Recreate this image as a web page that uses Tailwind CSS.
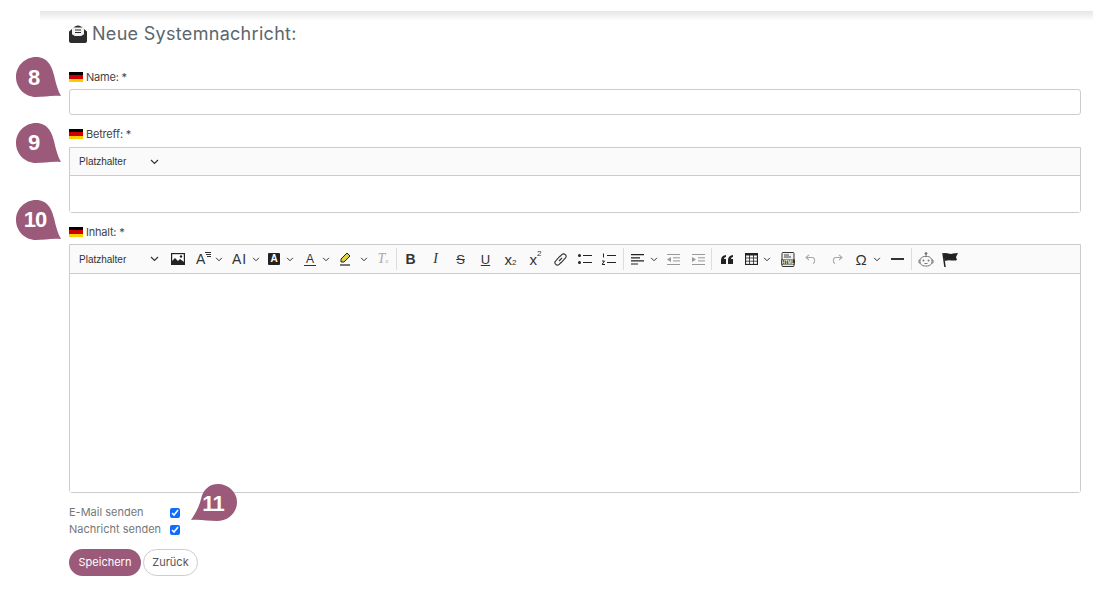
<!DOCTYPE html>
<html lang="de">
<head>
    <meta charset="UTF-8">
    <meta name="viewport" content="width=device-width, initial-scale=1.0">
    <title>Neue Systemnachricht</title>
    <script src="https://cdn.jsdelivr.net/npm/@tailwindcss/browser@4"></script>
</head>
<body class="bg-white overflow-hidden font-['Inter',sans-serif] text-[#555]">
<div class="relative h-[595px] w-[1093px] overflow-hidden">
    <!-- top shadow -->
    <div class="ml-[40px] h-[10px] mt-[11px] bg-gradient-to-b from-[#e6e6e6] to-white"></div>

    <!-- number bubbles -->
    <svg class="absolute left-[16px] top-[57px] w-[45px] h-[41px]" viewBox="0 0 45 41"><path d="M20 0C32 0 36 10 38 18C40 27 42 34 45 39C36 38 28 40 20 40C9 40 0 31 0 20C0 9 9 0 20 0Z" fill="#9b5a79"/></svg>
    <span class="absolute left-[14px] top-[57px] w-[40px] h-[40px] flex items-center justify-center text-white font-bold text-[22px] font-['Liberation_Sans',sans-serif]">8</span>
    <svg class="absolute left-[16px] top-[123px] w-[45px] h-[41px]" viewBox="0 0 45 41"><path d="M20 0C32 0 36 10 38 18C40 27 42 34 45 39C36 38 28 40 20 40C9 40 0 31 0 20C0 9 9 0 20 0Z" fill="#9b5a79"/></svg>
    <span class="absolute left-[14px] top-[122px] w-[40px] h-[40px] flex items-center justify-center text-white font-bold text-[22px] font-['Liberation_Sans',sans-serif]">9</span>
    <svg class="absolute left-[16px] top-[200px] w-[45px] h-[41px]" viewBox="0 0 45 41"><path d="M20 0C32 0 36 10 38 18C40 27 42 34 45 39C36 38 28 40 20 40C9 40 0 31 0 20C0 9 9 0 20 0Z" fill="#9b5a79"/></svg>
    <span class="absolute left-[15px] top-[199px] w-[40px] h-[40px] flex items-center justify-center text-white font-bold text-[22px] tracking-[-1px] font-['Liberation_Sans',sans-serif]">10</span>
    <svg class="absolute left-[191px] top-[484px] w-[46px] h-[38px]" viewBox="0 0 46 38"><path d="M27 0C37 0 46 8 46 18C46 29 37 37 26 37C17 37 9 35 0 36C4 30 8 23 10 15C12 6 18 0 27 0Z" fill="#9b5a79"/></svg>
    <span class="absolute left-[192px] top-[484px] w-[42px] h-[38px] flex items-center justify-center text-white font-bold text-[22px] tracking-[-1px] font-['Liberation_Sans',sans-serif]">11</span>

    <div class="pl-[69px] pr-[12px]">
        <!-- heading -->
        <div class="flex items-center gap-[5px] h-[26px] mt-0">
            <svg class="w-[18px] h-[18px] shrink-0" viewBox="0 0 18 18"><path d="M0 6.500L6 1.500Q9 -.5 12 1.500L18 6.500V16a2 2 0 0 1-2 2H2a2 2 0 0 1-2-2Z" fill="#2d2d2d"/><rect x="3" y="2.500" width="12" height="8.500" rx="1" fill="#f3f3f3"/><path d="M6 5h6M6 7.500h6" stroke="#2d2d2d"/><path d="M1 8L9 13L17 8V10L9 15L1 10Z" fill="#2d2d2d"/></svg>
            <h1 class="text-[18px] leading-none tracking-[0.3px] text-[#5c6670] font-normal">Neue Systemnachricht:</h1>
        </div>

        <!-- Name -->
        <label class="mt-[22px] flex items-center gap-[3px] h-[16px] text-[11px] font-normal tracking-[-0.2px] text-[#444]">
            <span class="w-[14px] h-[10px] flex flex-col shrink-0"><i class="flex-1 bg-black"></i><i class="flex-1 bg-[#d00000]"></i><i class="flex-1 bg-[#ffce00]"></i></span>
            Name: *
        </label>
        <input type="text" class="mt-[4px] block w-full h-[26px] bg-white border border-[#ccc] rounded-[3px]">

        <!-- Betreff -->
        <label class="mt-[11px] flex items-center gap-[3px] h-[16px] text-[11px] font-normal tracking-[-0.2px] text-[#444]">
            <span class="w-[14px] h-[10px] flex flex-col shrink-0"><i class="flex-1 bg-black"></i><i class="flex-1 bg-[#d00000]"></i><i class="flex-1 bg-[#ffce00]"></i></span>
            Betreff: *
        </label>
        <div class="mt-[5px] border border-[#ccc] rounded-b-[3px]">
            <div class="h-[28px] bg-[#fafafa] border-b border-[#ccc] flex items-center pl-[9px] text-[10px] text-[#333] font-['Liberation_Sans',sans-serif]">
                <span class="w-[71px]">Platzhalter</span>
                <svg class="w-[9px] h-[6px]" viewBox="0 0 9 6"><path d="M1 1l3.500 3.500L8 1" fill="none" stroke="#333" stroke-width="1.200"/></svg>
            </div>
            <div class="h-[36px] bg-white"></div>
        </div>

        <!-- Inhalt -->
        <label class="mt-[11px] flex items-center gap-[3px] h-[16px] text-[11px] font-normal tracking-[-0.2px] text-[#444]">
            <span class="w-[14px] h-[10px] flex flex-col shrink-0"><i class="flex-1 bg-black"></i><i class="flex-1 bg-[#d00000]"></i><i class="flex-1 bg-[#ffce00]"></i></span>
            Inhalt: *
        </label>
        <div class="mt-[4px] border border-[#ccc] rounded-b-[3px]">
            <div class="h-[29px] bg-[#fafafa] border-b border-[#ccc] flex items-center text-[#333] font-['Liberation_Sans',sans-serif]">
                <!-- Platzhalter dropdown -->
                <div class="w-[96px] flex items-center pl-[9px] text-[10px]">
                    <span class="w-[71px]">Platzhalter</span>
                    <svg class="w-[9px] h-[6px]" viewBox="0 0 9 6"><path d="M1 1l3.500 3.500L8 1" fill="none" stroke="#333" stroke-width="1.200"/></svg>
                </div>
                <!-- image -->
                <div class="w-[24px] flex justify-center"><svg class="w-[14px] h-[12px]" viewBox="0 0 14 12"><rect x=".6" y=".6" width="12.800" height="10.800" fill="#fff" stroke="#222" stroke-width="1.200"/><path d="M1 11V8l3-3 3 3 2-2 4 3v2Z" fill="#222"/><circle cx="10" cy="3.500" r="1.200" fill="#222"/></svg></div>
                <!-- font size -->
                <div class="w-[37px] flex items-center pl-[6px] gap-[3px]">
                    <span class="w-[14px] relative text-[14px] leading-none">A<svg class="absolute left-[9px] top-0 w-[6px] h-[6px]" viewBox="0 0 6 6"><path d="M0 .5h6M1 2.500h5M2 4.500h4" stroke="#333"/></svg></span>
                    <svg class="w-[8px] h-[5px] ml-[2px]" viewBox="0 0 9 6"><path d="M1 1l3.500 3.500L8 1" fill="none" stroke="#333" stroke-width="1.200"/></svg>
                </div>
                <!-- line height -->
                <div class="w-[37px] flex items-center pl-[5px] gap-[3px]">
                    <span class="w-[14px] text-[14px] leading-none tracking-[1px]">AI</span>
                    <svg class="w-[8px] h-[5px] ml-[3px]" viewBox="0 0 9 6"><path d="M1 1l3.500 3.500L8 1" fill="none" stroke="#333" stroke-width="1.200"/></svg>
                </div>
                <!-- background colour -->
                <div class="w-[36px] flex items-center pl-[4px] gap-[6px]">
                    <span class="w-[12px] h-[12px] bg-[#222] text-white text-[10px] leading-[12px] text-center font-bold rounded-[1px]">A</span>
                    <svg class="w-[8px] h-[5px]" viewBox="0 0 9 6"><path d="M1 1l3.500 3.500L8 1" fill="none" stroke="#333" stroke-width="1.200"/></svg>
                </div>
                <!-- font colour -->
                <div class="w-[36px] flex items-center pl-[4px] gap-[6px]">
                    <span class="w-[12px] border-b border-[#333] text-[12px] leading-[12px] text-center">A</span>
                    <svg class="w-[8px] h-[5px]" viewBox="0 0 9 6"><path d="M1 1l3.500 3.500L8 1" fill="none" stroke="#333" stroke-width="1.200"/></svg>
                </div>
                <!-- highlight -->
                <div class="w-[36px] flex items-center pl-[2px] gap-[8px]">
                    <svg class="w-[14px] h-[14px]" viewBox="0 0 14 14"><path d="M9 1l3 3-6 6H3V7Z" fill="#e2d23a" stroke="#222"/><path d="M2 13h10" stroke="#222" stroke-width="1.200"/></svg>
                    <svg class="w-[8px] h-[5px]" viewBox="0 0 9 6"><path d="M1 1l3.500 3.500L8 1" fill="none" stroke="#333" stroke-width="1.200"/></svg>
                </div>
                <!-- remove format -->
                <div class="w-[24px] flex justify-center font-['Liberation_Serif',serif] text-[#aaa] italic text-[14px] leading-none pr-[2px]">T<span class="text-[7px] mt-[6px]">x</span></div>
                <span class="w-px h-[22px] bg-[#ddd]"></span>

                <!-- basic styles -->
                <div class="w-[2px]"></div>
                <div class="w-[25px] flex justify-center text-[14px] font-bold leading-none -ml-[1px]">B</div>
                <div class="w-[25px] flex justify-center text-[14px] italic leading-none font-['Liberation_Serif',serif]">I</div>
                <div class="w-[25px] flex justify-center text-[13px] line-through leading-none">S</div>
                <div class="w-[25px] flex justify-center text-[13px] underline leading-none">U</div>
                <div class="w-[25px] flex justify-center text-[15px] leading-none">x<span class="text-[8px] mt-[7px]">2</span></div>
                <div class="w-[25px] flex justify-center text-[15px] leading-none">x<span class="text-[8px] -mt-[2px]">2</span></div>
                <!-- link -->
                <div class="w-[24px] flex justify-center"><svg class="w-[13px] h-[13px]" viewBox="0 0 13 13" fill="none" stroke="#333" stroke-width="1.100"><path d="M6 3.500l1.800-1.800a2.400 2.400 0 0 1 3.500 3.500L7 9.800M7 9.500l-1.800 1.800A2.400 2.400 0 0 1 1.700 7.800L6 3.200"/><path d="M5 8l3-3"/></svg></div>
                <!-- lists -->
                <div class="w-[25px] flex justify-center"><svg class="w-[14px] h-[12px]" viewBox="0 0 14 12"><circle cx="1.500" cy="2.500" r="1.500" fill="#222"/><circle cx="1.500" cy="9.500" r="1.500" fill="#222"/><path d="M5 2.500h9M5 9.500h9" stroke="#222" stroke-width="1.200"/></svg></div>
                <div class="w-[24px] flex justify-center"><svg class="w-[14px] h-[12px]" viewBox="0 0 14 12"><path d="M1.500 0.500v4M0 8h2.500L0 11.500h3" stroke="#222" fill="none"/><path d="M5 2.500h9M5 9.500h9" stroke="#222" stroke-width="1.200"/></svg></div>
                <div class="w-[2px]"></div>
                <span class="w-px h-[22px] bg-[#ddd]"></span>

                <!-- align -->
                <div class="w-[37px] flex items-center pl-[7px] gap-[6px]">
                    <svg class="w-[13px] h-[11px]" viewBox="0 0 13 11"><path d="M0 .7h13M0 3.800h9M0 6.900h13M0 10h7" stroke="#222" stroke-width="1.200"/></svg>
                    <svg class="w-[8px] h-[5px]" viewBox="0 0 9 6"><path d="M1 1l3.500 3.500L8 1" fill="none" stroke="#333" stroke-width="1.200"/></svg>
                </div>
                <!-- outdent / indent -->
                <div class="w-[25px] flex justify-center"><svg class="w-[13px] h-[11px]" viewBox="0 0 13 11" stroke="#999"><path d="M0 .5h13M6 3.800h7M6 6.900h7M0 10.500h13"/><path d="M4 3v5L0 5.500Z" fill="#999" stroke="none"/></svg></div>
                <div class="w-[25px] flex justify-center"><svg class="w-[13px] h-[11px]" viewBox="0 0 13 11" stroke="#999"><path d="M0 .5h13M6 3.800h7M6 6.900h7M0 10.500h13"/><path d="M0 3v5l4-2.500Z" fill="#999" stroke="none"/></svg></div>
                <span class="w-px h-[22px] bg-[#ddd]"></span>

                <!-- quote -->
                <div class="w-[29px] flex justify-center"><svg class="w-[12px] h-[9px]" viewBox="0 0 12 9" fill="#222"><path d="M0 9V5C0 2 2 .5 5 0v2C3.500 2.400 3 3.200 3 4h2v5ZM7 9V5c0-3 2-4.500 5-5v2c-1.500.4-2 1.200-2 2h2v5Z"/></svg></div>
                <!-- table -->
                <div class="w-[37px] flex items-center pl-[4px] gap-[5px]">
                    <svg class="w-[13px] h-[12px]" viewBox="0 0 13 12" fill="none" stroke="#222"><rect x=".5" y=".5" width="12" height="11" stroke-width="1.200"/><path d="M.5 1.500h12" stroke-width="2"/><path d="M.5 5h12M.5 8.200h12M4.500 1v10M8.500 1v10" stroke-width=".8"/></svg>
                    <svg class="w-[8px] h-[5px]" viewBox="0 0 9 6"><path d="M1 1l3.500 3.500L8 1" fill="none" stroke="#333" stroke-width="1.200"/></svg>
                </div>
                <!-- source -->
                <div class="w-[20px] flex justify-center"><svg class="w-[14px] h-[15px]" viewBox="0 0 14 15"><rect x="1" y=".5" width="12" height="14" rx="1" fill="#eee" stroke="#333"/><path d="M3 3h5M3 5h7" stroke="#444"/><rect x="0" y="7.500" width="14" height="5" fill="#333"/><text x="7" y="11.600" text-anchor="middle" font-size="4.500" font-weight="700" fill="#fff" font-family="Liberation Sans">HTML</text></svg></div>
                <!-- undo / redo -->
                <div class="w-[27px] flex justify-center"><svg class="w-[13px] h-[10px]" viewBox="0 0 13 10" fill="none" stroke="#aaa" stroke-width="1.100"><path d="M4 .8L1 3.500 4 6.200M1 3.500h7a3.500 3.500 0 0 1 0 6"/></svg></div>
                <div class="w-[22px] flex justify-center"><svg class="w-[13px] h-[10px]" viewBox="0 0 13 10" fill="none" stroke="#aaa" stroke-width="1.100"><path d="M9 .8l3 2.700-3 2.700M12 3.500H5a3.500 3.500 0 0 0 0 6"/></svg></div>
                <!-- special chars -->
                <div class="w-[39px] flex items-center pl-[7px] gap-[5px]">
                    <span class="w-[14px] text-[15px] leading-none text-center">Ω</span>
                    <svg class="w-[8px] h-[5px]" viewBox="0 0 9 6"><path d="M1 1l3.500 3.500L8 1" fill="none" stroke="#333" stroke-width="1.200"/></svg>
                </div>
                <div class="w-[22px] flex justify-center"><span class="block w-[13px] h-[2px] bg-[#333]"></span></div>
                <div class="w-[3px]"></div>
                <span class="w-px h-[22px] bg-[#ddd]"></span>

                <!-- robot -->
                <div class="w-[28px] flex justify-center"><svg class="w-[16px] h-[15px]" viewBox="0 0 16 15" fill="none" stroke="#777"><circle cx="8" cy="1.500" r="1" fill="#777"/><path d="M8 2.500v2"/><rect x="2" y="4.500" width="12" height="9.500" rx="4.500"/><path d="M2 8H1v3h1M14 8h1v3h-1M6.500 11.500h3"/><circle cx="5.500" cy="8.500" r="1" fill="#777" stroke="none"/><circle cx="10.500" cy="8.500" r="1" fill="#777" stroke="none"/></svg></div>
                <!-- flag -->
                <div class="w-[20px] flex justify-center"><svg class="w-[16px] h-[15px]" viewBox="0 0 16 15"><path d="M1 1l2 14" stroke="#222" stroke-width="1.500"/><path d="M1.500 1.500C5 0 8 3 11 1.500L16 1l-2 4 1 3c-4 1.500-7-1-12.500 1Z" fill="#222"/></svg></div>
            </div>
            <div class="h-[218px] bg-white"></div>
        </div>

        <!-- checkboxes -->
        <div class="mt-[11px] flex items-center h-[17px] text-[11px] text-[#777]">
            <span class="w-[101px]">E-Mail senden</span>
            <input type="checkbox" checked class="w-[10px] h-[10px] accent-[#0d6efd]">
        </div>
        <div class="flex items-center h-[17px] text-[11px] text-[#777]">
            <span class="w-[101px]">Nachricht senden</span>
            <input type="checkbox" checked class="w-[10px] h-[10px] accent-[#0d6efd]">
        </div>

        <!-- buttons -->
        <div class="mt-[11px] flex gap-[2px]">
            <button class="w-[72px] h-[27px] rounded-full bg-[#9b5a79] text-white text-[11px]">Speichern</button>
            <button class="w-[55px] h-[27px] rounded-full bg-white border border-[#ccc] text-[#555] text-[11px]">Zurück</button>
        </div>
    </div>
</div>
</body>
</html>
